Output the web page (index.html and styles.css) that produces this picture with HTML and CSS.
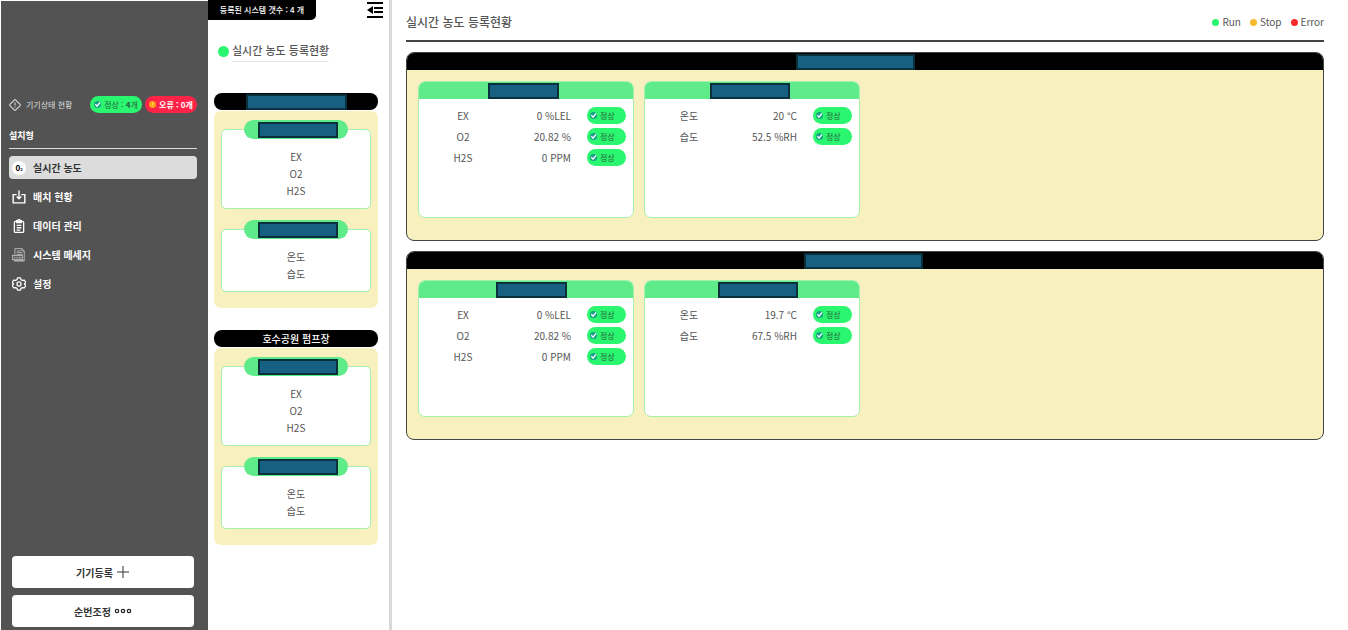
FILE: index.html
```html
<!DOCTYPE html>
<html lang="ko">
<head>
  <meta charset="UTF-8">
  <meta name="viewport" content="width=device-width, initial-scale=1.0">
  <title>실시간 농도</title>
  <link rel="stylesheet" href="styles.css">
</head>
<body>

  <!-- 공통 아이콘 -->
  <svg class="sprite" aria-hidden="true">
    <symbol id="check" viewBox="0 0 16 16">
      <circle cx="8" cy="8" r="8" fill="#16a085"/>
      <path d="M3 7l4 5 7-9" fill="none" stroke="#fff" stroke-width="3"/>
    </symbol>
  </svg>

  <aside class="sidebar">
    <div class="status">
      <svg class="status-icon" viewBox="0 0 24 24" fill="none" stroke="#ddd" stroke-width="2">
        <rect x="4" y="4" width="16" height="16" rx="1.5" transform="rotate(45 12 12)"/>
        <path d="M12 7v6M12 15v2"/>
      </svg>
      <span class="status-label">기기상태 현황</span>
      <span class="count count-ok"><svg class="dot-icon"><use href="#check"/></svg>정상 : <b>4</b>개</span>
      <span class="count count-error">
        <svg class="dot-icon" viewBox="0 0 16 16"><circle cx="8" cy="8" r="8" fill="#ff9f1a"/><path d="M8 3v6M8 11v2" stroke="#ffe08a" stroke-width="2"/></svg>오류 : 0개</span>
    </div>

    <h2 class="side-title">설치형</h2>

    <nav class="menu">
      <a class="menu-item active" href="#">
        <span class="o2">0<small>2</small></span>
        실시간 농도
      </a>
      <a class="menu-item" href="#">
        <svg viewBox="0 0 24 24" fill="none" stroke="#fff" stroke-width="2.4">
          <path d="M8 8H2v14h20V8h-6M12 1v14M8 11l4 4 4-4"/>
        </svg>
        배치 현황
      </a>
      <a class="menu-item" href="#">
        <svg viewBox="0 0 24 24" fill="none" stroke="#fff" stroke-width="2.2">
          <rect x="4" y="4" width="16" height="19" rx="2"/>
          <path d="M8 6V3h2a2 2 0 0 1 4 0h2v3zM8 11h8M8 15h8M8 19h6"/>
        </svg>
        데이터 관리
      </a>
      <a class="menu-item" href="#">
        <svg viewBox="0 0 24 24" fill="none" stroke="#ccc" stroke-width="1.3">
          <path d="M5 12V1h12l4 4v17H4M17 1v4h4M8 5h7M8 8h10M8 11h10"/>
          <rect x="1" y="13" width="17" height="7"/>
          <path d="M4 15v3M7 15v3M10 15v3M13 15v3M15 15v3M3 22h18"/>
        </svg>
        시스템 메세지
      </a>
      <a class="menu-item" href="#">
        <svg viewBox="0 0 24 24" fill="none" stroke="#fff" stroke-width="2.2" stroke-linejoin="round">
          <path d="M9.5 1.5h5l1 3 2.5 1.4 3.1-.7 2.4 4.3-2.1 2.5 2.1 2.5-2.4 4.300-3.100-.7-2.500 1.400-1 3h-5l-1-3L6 18.100l-3.100.7L.5 14.500 2.600 12 .5 9.500l2.400-4.300 3.100.7 2.500-1.400z"/>
          <circle cx="12" cy="12" r="3.5"/>
        </svg>
        설정
      </a>
    </nav>

    <div class="side-buttons">
      <button type="button">기기등록
        <svg viewBox="0 0 14 14" fill="none" stroke="#333" stroke-width="1"><path d="M7 1v12M1 7h12"/></svg>
      </button>
      <button type="button">순번조정
        <svg class="dots" viewBox="0 0 18 6" fill="none" stroke="#222" stroke-width="1.2"><circle cx="3" cy="3" r="1.7"/><circle cx="9" cy="3" r="1.7"/><circle cx="15" cy="3" r="1.7"/></svg>
      </button>
    </div>
  </aside>

  <section class="list">
    <div class="list-top">
      <span class="total">등록된 시스템 갯수 : 4 개</span>
      <button type="button" class="fold" aria-label="목록 접기">
        <svg viewBox="0 0 16 16"><path d="M0 1h16M7 6h9M7 10h9M0 15h16" stroke="#000" stroke-width="2"/><path d="M6 4v8L0 8z"/></svg>
      </button>
    </div>

    <h3 class="list-title"><span>실시간 농도 등록현황</span></h3>

    <div class="group">
      <div class="group-head"><span class="mask mask-group"></span></div>
      <div class="group-body">
        <div class="device">
          <div class="device-name"><span class="mask"></span></div>
          <ul><li>EX</li><li>O2</li><li>H2S</li></ul>
        </div>
        <div class="device">
          <div class="device-name"><span class="mask"></span></div>
          <ul><li>온도</li><li>습도</li></ul>
        </div>
      </div>
    </div>

    <div class="group">
      <div class="group-head">호수공원 펌프장</div>
      <div class="group-body">
        <div class="device">
          <div class="device-name"><span class="mask"></span></div>
          <ul><li>EX</li><li>O2</li><li>H2S</li></ul>
        </div>
        <div class="device">
          <div class="device-name"><span class="mask"></span></div>
          <ul><li>온도</li><li>습도</li></ul>
        </div>
      </div>
    </div>
  </section>

  <main class="main">
    <header class="main-head">
      <h1>실시간 농도 등록현황</h1>
      <div class="legend">
        <span class="run">Run</span>
        <span class="stop">Stop</span>
        <span class="error">Error</span>
      </div>
    </header>

    <section class="panel panel-first">
      <div class="panel-head"><span class="mask mask-panel"></span></div>
      <div class="cards">
        <div class="card">
          <div class="card-head"><span class="mask mask-gas"></span></div>
          <table>
            <tr><th>EX</th><td>0 %LEL</td><td><span class="badge"><svg><use href="#check"/></svg>정상</span></td></tr>
            <tr><th>O2</th><td>20.82 %</td><td><span class="badge"><svg><use href="#check"/></svg>정상</span></td></tr>
            <tr><th>H2S</th><td>0 PPM</td><td><span class="badge"><svg><use href="#check"/></svg>정상</span></td></tr>
          </table>
        </div>
        <div class="card">
          <div class="card-head"><span class="mask"></span></div>
          <table>
            <tr><th>온도</th><td>20 °C</td><td><span class="badge"><svg><use href="#check"/></svg>정상</span></td></tr>
            <tr><th>습도</th><td>52.5 %RH</td><td><span class="badge"><svg><use href="#check"/></svg>정상</span></td></tr>
          </table>
        </div>
      </div>
    </section>

    <section class="panel panel-second">
      <div class="panel-head"><span class="mask mask-panel"></span></div>
      <div class="cards">
        <div class="card">
          <div class="card-head"><span class="mask mask-gas"></span></div>
          <table>
            <tr><th>EX</th><td>0 %LEL</td><td><span class="badge"><svg><use href="#check"/></svg>정상</span></td></tr>
            <tr><th>O2</th><td>20.82 %</td><td><span class="badge"><svg><use href="#check"/></svg>정상</span></td></tr>
            <tr><th>H2S</th><td>0 PPM</td><td><span class="badge"><svg><use href="#check"/></svg>정상</span></td></tr>
          </table>
        </div>
        <div class="card">
          <div class="card-head"><span class="mask"></span></div>
          <table>
            <tr><th>온도</th><td>19.7 °C</td><td><span class="badge"><svg><use href="#check"/></svg>정상</span></td></tr>
            <tr><th>습도</th><td>67.5 %RH</td><td><span class="badge"><svg><use href="#check"/></svg>정상</span></td></tr>
          </table>
        </div>
      </div>
    </section>
  </main>

</body>
</html>
```
FILE: styles.css
```css
* {
  box-sizing: border-box;
}

body {
  margin: 0;
  min-height: 100vh;
  display: flex;
  background-color: #fff;
  color: #555;
  font-family: "Noto Sans CJK KR", "Noto Sans", sans-serif;
  font-size: 10px;
  line-height: 16px;
}

h1, h2, h3, ul {
  margin: 0;
  padding: 0;
}

ul {
  list-style: none;
}

button {
  font-family: inherit;
  cursor: pointer;
}

svg {
  flex: none;
}

.sprite {
  position: absolute;
  width: 0;
  height: 0;
}

/* 왼쪽 메뉴 */
.sidebar {
  flex: none;
  width: 208px;
  display: flex;
  flex-direction: column;
  padding: 95px 11px 3px 8px;
  border-left: 1px solid #fff;
  border-top: 1px solid #fff;
  background-color: #535353;
  color: #fff;
}

.status {
  display: flex;
  align-items: center;
  font-size: 8px;
}

.status-icon {
  width: 12px;
  height: 12px;
  margin-right: 5px;
  overflow: visible;
}

.status-label {
  margin-right: auto;
  color: #ddd;
}

.count {
  display: flex;
  align-items: center;
  justify-content: center;
  width: 52px;
  height: 17px;
  border-radius: 9px;
  white-space: pre;
}

.count-ok {
  margin-right: 3px;
  background-color: #2bf66f;
  color: #28603c;
}

.count-error {
  background-color: #ff2347;
  font-weight: bold;
}

.dot-icon {
  width: 7px;
  height: 7px;
  margin-right: 3px;
}

.side-title {
  margin: 15px 0 7px;
  padding-bottom: 4px;
  border-bottom: 1px solid #ddd;
  font-size: 9px;
  line-height: 16px;
}

.menu {
  display: flex;
  flex-direction: column;
  gap: 6px;
}

.menu-item {
  display: flex;
  align-items: center;
  gap: 7px;
  height: 23px;
  padding-left: 3px;
  border-radius: 4px;
  color: #fff;
  font-weight: bold;
  text-decoration: none;
}

.menu-item svg {
  width: 14px;
  height: 14px;
}

.menu-item.active {
  background-color: #dcdcdc;
  color: #333;
}

.o2 {
  width: 14px;
  height: 14px;
  border-radius: 50%;
  background-color: #fff;
  color: #000;
  font-size: 8px;
  font-weight: bold;
  line-height: 14px;
  text-align: center;
}

.o2 small {
  font-size: 4px;
}

.side-buttons {
  display: flex;
  flex-direction: column;
  gap: 7px;
  margin-top: auto;
  padding: 0 3px;
}

.side-buttons button {
  display: flex;
  align-items: center;
  justify-content: center;
  gap: 3px;
  height: 32px;
  border: none;
  border-radius: 4px;
  background-color: #fff;
  color: #333;
  font-size: 10px;
  font-weight: bold;
}

.side-buttons svg {
  width: 14px;
  height: 14px;
}

.side-buttons .dots {
  width: 18px;
  height: 6px;
}

/* 등록 목록 */
.list {
  flex: none;
  width: 184px;
  padding-bottom: 20px;
  border-right: 3px solid #d9d9d9;
}

.list-top {
  display: flex;
  justify-content: space-between;
  align-items: flex-start;
  padding-right: 6px;
}

.total {
  width: 108px;
  height: 20px;
  border-radius: 0 0 5px 0;
  background-color: #000;
  color: #fff;
  font-size: 8px;
  font-weight: 500;
  line-height: 20px;
  text-align: center;
}

.fold {
  padding: 2px 0 0;
  border: none;
  background: none;
}

.fold svg {
  display: block;
  width: 16px;
  height: 16px;
}

.list-title {
  display: flex;
  align-items: center;
  gap: 3px;
  margin: 20px 10px 31px;
  font-size: 11px;
  font-weight: 500;
  line-height: 20px;
}

.list-title::before {
  content: "";
  width: 11px;
  height: 11px;
  border-radius: 50%;
  background-color: #2bf66f;
}

.list-title span {
  padding-bottom: 1px;
  border-bottom: 1px solid #e3e8e8;
}

.group {
  margin: 0 11px 22px 6px;
}

.group-head {
  display: flex;
  align-items: center;
  justify-content: center;
  height: 17px;
  margin-bottom: 1px;
  border-radius: 8px;
  background-color: #000;
  color: #fff;
  font-weight: 500;
}

.group-body {
  display: flex;
  flex-direction: column;
  gap: 20px;
  padding: 18px 7px 16px;
  border-radius: 7px;
  background-color: #f8f1bf;
}

.device {
  position: relative;
  padding: 18px 0 9px;
  border: 1px solid #a5f0ad;
  border-radius: 5px;
  background-color: #fff;
  line-height: 17px;
  text-align: center;
}

/* 카드 윗선에 걸치는 이름표 */
.device-name {
  position: absolute;
  top: -10px;
  left: 22px;
  right: 22px;
  display: flex;
  align-items: center;
  justify-content: center;
  height: 19px;
  padding-left: 3px;
  border-radius: 10px;
  background-color: #60eb8a;
}

/* 이름 가림 */
.mask {
  width: 80px;
  height: 16px;
  border: 2px solid #0a2f3d;
  background-color: #176082;
}

.mask-gas {
  width: 71px;
}

.mask-group {
  width: 101px;
}

.mask-panel {
  width: 119px;
}

/* 본문 */
.main {
  flex: 1;
  min-width: 0;
  padding: 12px 24px 20px 14px;
}

.main-head {
  display: flex;
  align-items: center;
  justify-content: space-between;
  margin-bottom: 10px;
  padding-bottom: 8px;
  border-bottom: 2px solid #444;
}

.main-head h1 {
  font-size: 12px;
  font-weight: 500;
  line-height: 20px;
}

.legend {
  display: flex;
  gap: 9px;
}

.legend span {
  display: flex;
  align-items: center;
  gap: 3px;
}

.legend span::before {
  content: "";
  width: 7px;
  height: 7px;
  border-radius: 50%;
}

.legend .run::before {
  background-color: #2bf66f;
}

.legend .stop::before {
  background-color: #f5b92e;
}

.legend .error::before {
  background-color: #f52a2a;
}

.panel {
  margin-bottom: 10px;
  border: 1px solid #444;
  border-radius: 8px;
  background-color: #f8f1bf;
  overflow: hidden;
}

.panel-head, .card-head {
  display: flex;
  align-items: center;
  justify-content: center;
  height: 17px;
}

.panel-head {
  padding-right: 4px;
  background-color: #000;
}

.card-head {
  background-color: #60eb8a;
}

.panel-first .panel-head {
  padding-right: 19px;
}

.panel-first .card-head {
  padding-right: 5px;
}

.panel-second .card-head {
  padding-left: 11px;
}

.cards {
  display: flex;
  flex-wrap: wrap;
  gap: 10px;
  padding: 11px 11px 22px;
}

.card {
  width: 216px;
  min-height: 137px;
  border: 1px solid #a5f0ad;
  border-radius: 7px;
  background-color: #fff;
  overflow: hidden;
}

.card table {
  width: 100%;
  margin-top: 6px;
  border-collapse: collapse;
  table-layout: fixed;
}

.card th, .card td {
  height: 21px;
  padding: 0;
  font-weight: normal;
}

.card th {
  width: 88px;
}

.card td {
  width: 64px;
  text-align: right;
}

.card td:last-child {
  width: auto;
  padding-left: 16px;
}

.badge {
  display: flex;
  align-items: center;
  gap: 3px;
  width: 39px;
  height: 17px;
  padding-left: 3px;
  border-radius: 9px;
  background-color: #2bf66f;
  color: #28603c;
  font-size: 8px;
}

.badge svg {
  width: 7px;
  height: 7px;
}
```
